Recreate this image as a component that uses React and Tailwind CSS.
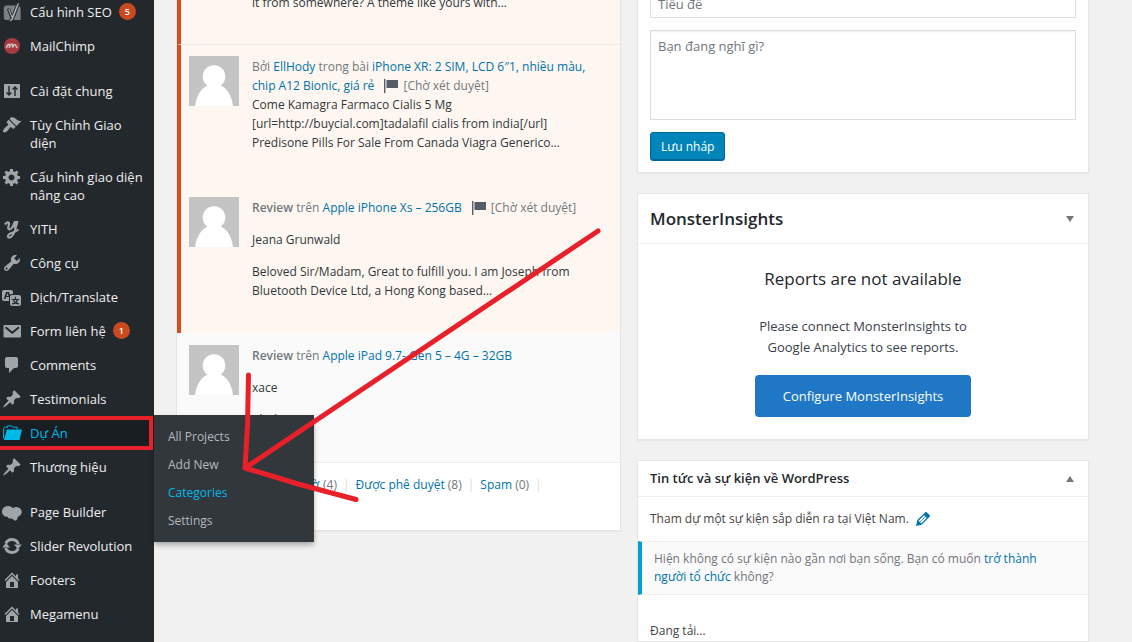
import React from "react";

const Dash = ({ children, size = 20, className = "" }) => (
  <svg viewBox="0 0 20 20" width={size} height={size} fill="currentColor" className={className} aria-hidden="true">
    {children}
  </svg>
);

const YoastIcon = () => (
  <Dash>
    <path d="M4.500 3.500h9.500L10 13.500 7.800 7.500H5l3.600 8.700L7.600 18H4.500c-1.500 0-2.700-1-2.700-2.600V6.100c0-1.500 1.200-2.600 2.700-2.600z" opacity=".7" />
    <path d="M17 4.200c1 .3 1.600 1.100 1.600 2.200V18h-7z" opacity=".7" />
    <path d="M15.400 1h2.200L11.600 16.500C10.800 18.700 9.500 19.500 7.300 19.500v-1.800c1.200-.1 1.800-.7 2.100-1.700L5.600 6.900h2.100l2.500 6.500z" fill="#b4b9be" stroke="#23282d" strokeWidth=".8" />
  </Dash>
);
const ChimpIcon = () => (
  <Dash>
    <circle cx="10" cy="10" r="8" fill="#a73a40" />
    <path d="M4.300 12.200c.6-2 1.200-3.800 2.400-4 .9-.1.800 1.600.6 3.600.8-2.400 1.700-3.800 2.600-3.700 1 .1.600 2 .6 3.500.8-1.900 1.500-3.200 2.400-3 1.100.2.700 2 2.600 3.200" fill="none" stroke="#cfc0c2" strokeWidth="1.500" />
  </Dash>
);
const SettingsIcon = () => (
  <Dash>
    <path d="M2 3h16v14H2z" />
    <path d="M7 5v9M4.600 11.500 7 14l2.400-2.500M13 15V6M10.600 8.500 13 6l2.400 2.500" fill="none" stroke="#23282d" strokeWidth="1.500" />
  </Dash>
);
const BrushIcon = () => (
  <Dash><path d="M14.48 11.06L7.41 3.99l1.5-1.5c.5-.56 2.3-.47 3.51.32 1.21.8 1.43 1.28 2.91 2.1 1.18.64 2.45 1.26 4.45.85zm-.71.71L6.7 4.7 4.93 6.47c-.39.39-.39 1.02 0 1.41l1.06 1.06c.39.39.39 1.03 0 1.42-.6.6-1.43 1.11-2.21 1.69-.35.26-.7.53-1.01.84C1.43 14.23.4 16.08 1.4 17.07c.99 1 2.84-.03 4.18-1.36.31-.31.58-.66.85-1.02.57-.78 1.08-1.61 1.69-2.21.39-.39 1.02-.39 1.41 0l1.06 1.06c.39.39 1.02.39 1.41 0z" /></Dash>
);
const GearIcon = () => (
  <Dash><path d="M18 12h-2.180c-.17.7-.44 1.350-.81 1.930l1.540 1.540-2.100 2.100-1.540-1.540c-.58.36-1.230.63-1.910.79V19H8v-2.180c-.68-.16-1.330-.43-1.910-.79l-1.540 1.540-2.120-2.120 1.540-1.540c-.36-.58-.63-1.230-.79-1.910H1V9.030h2.170c.16-.7.44-1.350.8-1.940L2.430 5.550l2.100-2.100 1.540 1.540c.58-.37 1.240-.64 1.930-.81V2h3v2.180c.68.16 1.330.43 1.910.79l1.540-1.540 2.120 2.120-1.540 1.540c.36.59.64 1.240.8 1.940H18V12zm-8.500 1.500c1.660 0 3-1.340 3-3s-1.340-3-3-3-3 1.340-3 3 1.340 3 3 3z" /></Dash>
);
const YithIcon = () => (
  <Dash>
    <path d="M3 5.500C4.300 3 7.300 2.300 7 5c-.3 2.200-1.700 5.200.3 5.300 2.400.1 4-3.400 5-6.800" fill="none" stroke="currentColor" strokeWidth="2.200" />
    <path d="M15 3c-1 4.500-1.600 8.200-3 11.200-1.500 3.200-4.600 5.300-5.900 3.800-1-1.500 1.100-3.200 3.600-4 2.300-.7 4.600-1.600 6.800-3.400" fill="none" stroke="currentColor" strokeWidth="2" />
    <path d="M12 2h4.600l-2 6.500-3.200 1z" />
  </Dash>
);
const WrenchIcon = () => (
  <Dash><path d="M16.68 9.77c-1.340 1.340-3.300 1.670-4.950.99l-5.410 6.520c-.99.99-2.590.99-3.580 0s-.99-2.590 0-3.570l6.520-5.420c-.68-1.650-.35-3.610.99-4.950 1.280-1.280 3.120-1.620 4.720-1.060l-2.890 2.890 2.820 2.820 2.860-2.870c.53 1.580.18 3.390-1.080 4.650zM3.810 16.210c.4.39 1.040.39 1.430 0 .4-.4.4-1.040 0-1.430-.39-.4-1.030-.4-1.430 0-.39.39-.39 1.030 0 1.430z" /></Dash>
);
const TranslateIcon = () => (
  <Dash><path d="M11 7H9.490c-.63 0-1.250.3-1.590.7L7 5H4.130l-2.390 7h1.690l.74-2H7v4H2c-1.100 0-2-.9-2-2V5c0-1.100.9-2 2-2h7c1.100 0 2 .9 2 2v2zM6.510 9H4.490l1-2.930zM10 8h7c1.100 0 2 .9 2 2v7c0 1.100-.9 2-2 2h-7c-1.100 0-2-.9-2-2v-7c0-1.100.9-2 2-2zm7.250 5v-1.080h-3.170V9.750h-1.160v2.170H9.750V13h1.280c.11.85.56 1.850 1.280 2.620-.87.36-1.890.62-2.310.62-.01.02.22.97.2 1.460.84 0 2.210-.5 3.280-1.150 1.090.65 2.480 1.150 3.340 1.150-.02-.49.2-1.440.2-1.460-.43 0-1.490-.27-2.380-.63.7-.77 1.140-1.770 1.250-2.610h1.360zm-3.810 1.930c-.5-.46-.85-1.130-1.010-1.930h2.090c-.17.8-.51 1.470-1 1.930l-.04.03s-.03-.02-.04-.03z" /></Dash>
);
const MailIcon = () => (
  <Dash>
    <rect x="1.500" y="4" width="17.500" height="12.500" rx="1" />
    <path d="M3.500 6.200l6.700 5.600L17 6.200" fill="none" stroke="#23282d" strokeWidth="2" />
  </Dash>
);
const CommentIcon = () => (
  <Dash><path d="M5 2h9c1.100 0 2 .9 2 2v7c0 1.100-.9 2-2 2h-2l-5 5v-5H5c-1.100 0-2-.9-2-2V4c0-1.100.9-2 2-2z" /></Dash>
);
const PinIcon = () => (
  <Dash><path d="M10.440 3.020l1.820-1.820 6.360 6.350-1.830 1.820c-1.050-.68-2.480-.57-3.410.36l-.75.75c-.92.93-1.040 2.350-.35 3.410l-1.830 1.820-2.410-2.410-2.800 2.790c-.42.42-3.380 2.710-3.800 2.290s1.860-3.390 2.280-3.810l2.790-2.790L4.100 9.360l1.830-1.820c1.050.69 2.480.57 3.400-.36l.75-.75c.93-.92 1.050-2.350.36-3.410z" /></Dash>
);
const FolderIcon = () => (
  <Dash>
    <path d="M1.600 15.500V5.500L2.500 4.200h3V2.900h4.200l1 1.300h4.500v2" fill="none" stroke="currentColor" strokeWidth="1" />
    <path d="M4.800 6.500H20L17.500 17H2z" />
  </Dash>
);
const BuilderIcon = () => (
  <Dash><path d="M6.200 4C9 4 10 5.600 11 6.200c1.300-1.200 3-1.500 4.800-.9 2.600.8 4.200 2.800 3.900 5.300-.3 2.200-2 3.700-4.200 4.300.4 1.200-.4 3.100-1.500 3.600-1.600.2-3-1.200-4-2.100-1.200.4-4 .2-4.500-1.600C2.400 14.900 0 12.500 0 9.700 0 6.400 2.900 4 6.200 4z" /></Dash>
);
const CycleIcon = () => (
  <Dash>
    <path d="M3.800 7.500a6.800 6.800 0 0 1 12.600.5M16.200 12.500a6.800 6.800 0 0 1-12.600-.5" fill="none" stroke="currentColor" strokeWidth="3" />
    <path d="M12 8.500h7.800l-3.900 4.800zM.2 11.500H8L4.100 6.700z" />
  </Dash>
);
const HomeIcon = () => (
  <Dash><path fillRule="evenodd" d="M16 8.500l1.530 1.530-1.060 1.060L10 4.600l-6.470 6.490-1.060-1.060L10 2.500l4 4v-2h2v4zm-6-2.460l6 5.990V18H4v-5.970zM12 17v-5H8v5h4z" /></Dash>
);
const PencilIcon = () => (
  <Dash size={20}><path d="M13.890 3.390l2.710 2.720c.46.46.42 1.240.03 1.640l-8.010 8.020-5.560 1.160 1.160-5.580s7.600-7.630 7.990-8.030c.39-.39 1.220-.39 1.680.07zm-2.730 2.790l-5.590 5.610 1.110 1.110 5.540-5.650zm-2.970 8.230l5.580-5.600-1.070-1.080-5.590 5.600z" /></Dash>
);

const menu = [
  { label: "Cấu hình SEO", icon: YoastIcon, badge: 5 },
  { label: "MailChimp", icon: ChimpIcon },
  { label: "Cài đặt chung", icon: SettingsIcon, gap: true },
  { label: "Tùy Chỉnh Giao diện", icon: BrushIcon },
  { label: "Cấu hình giao diện nâng cao", icon: GearIcon },
  { label: "YITH", icon: YithIcon },
  { label: "Công cụ", icon: WrenchIcon },
  { label: "Dịch/Translate", icon: TranslateIcon },
  { label: "Form liên hệ", icon: MailIcon, badge: 1 },
  { label: "Comments", icon: CommentIcon },
  { label: "Testimonials", icon: PinIcon },
  { label: "Dự Án", icon: FolderIcon, children: ["All Projects", "Add New", "Categories", "Settings"] },
  { label: "Thương hiệu", icon: PinIcon },
  { label: "Page Builder", icon: BuilderIcon, gap: true },
  { label: "Slider Revolution", icon: CycleIcon },
  { label: "Footers", icon: HomeIcon },
  { label: "Megamenu", icon: HomeIcon },
];

function MenuItem({ label, icon: Icon, badge, gap, children }) {
  const open = Boolean(children);
  return (
    <li className={gap ? "relative mt-[11px]" : "relative"}>
      <a
        href="#"
        className={
          open
            ? "flex items-start gap-2 bg-[#191e23] py-2 pr-2 pl-0.5 text-[13px] leading-[18px] text-[#00b9eb]"
            : "flex items-start gap-2 py-2 pr-2 pl-0.5 text-[13px] leading-[18px] text-[#eeeeee]"
        }
      >
        <span className={open ? "-my-px shrink-0" : "-my-px shrink-0 text-[#a0a5aa]"}>
          <Icon />
        </span>
        <span>{label}</span>
        {badge && (
          <span className="-ml-px flex size-[17px] items-center justify-center rounded-full bg-[#ca4a1f] text-[9px] font-semibold text-white">
            {badge}
          </span>
        )}
      </a>
      {open && (
        <>
          <ul className="absolute -top-px left-full z-10 w-40 bg-[#32373c] pt-2 pb-[7px] shadow-[0_3px_5px_rgba(0,0,0,0.3)]">
            {children.map((c) => (
              <li key={c}>
                <a
                  href="#"
                  className={
                    c === "Categories"
                      ? "block px-3.5 py-[5px] text-xs leading-[18px] text-[#00b9eb]"
                      : "block px-3.5 py-[5px] text-xs leading-[18px] text-[#b4b9be]"
                  }
                >
                  {c}
                </a>
              </li>
            ))}
          </ul>
          <div className="pointer-events-none absolute inset-y-0 -left-1 right-px z-20 border-4 border-[#e8202a]" />
        </>
      )}
    </li>
  );
}

const Avatar = () => (
  <svg viewBox="0 0 50 50" className="size-[50px] shrink-0" role="img" aria-label="Avatar">
    <path d="M0 0h50v50H0z" fill="#c4c4c4" />
    <circle cx="25" cy="20.500" r="11.300" fill="#fff" />
    <path d="M6 50C7.500 38 14 30.500 19 29.500h12C37 31 42.500 38 44 50z" fill="#fff" />
  </svg>
);

const Pending = () => (
  <span className="whitespace-nowrap text-[#72777c]">
    <svg viewBox="0 0 16 16" className="mr-1 ml-1.5 inline size-4 align-[-4px]" fill="#555d66" aria-hidden="true">
      <path d="M1 1h1.400v14H1zM3.500 2h11.500v8H3.500z" />
    </svg>
    [Chờ xét duyệt]
  </span>
);

const Link = ({ children }) => (
  <a href="#" className="text-[#0073aa]">{children}</a>
);

function Comment({ pending, divided, children }) {
  const tone = pending ? "border-l-[#d54e21] bg-[#fef7f1]" : "border-l-transparent bg-[#fafafa]";
  return (
    <li className={`flex gap-[13px] border-l-4 pr-3 pl-2 ${tone} ${divided ? "border-t border-t-[#f0e8e2] pt-[11px]" : "pt-3"}`}>
      <Avatar />
      <div className="pt-px text-[#32373c]">{children}</div>
    </li>
  );
}

const cardClass = "border border-[#e5e5e5] bg-white shadow-[0_1px_1px_rgba(0,0,0,0.04)]";

export default function App() {
  return (
    <div className="relative flex min-h-screen overflow-hidden bg-[#f1f1f1] font-['Open_Sans','Noto_Sans',sans-serif] text-xs leading-[19px] text-[#444444]">
      <nav className="w-[154px] shrink-0 bg-[#23282d]" aria-label="Menu">
        <ul className="-mt-[5px]">
          {menu.map((m) => (
            <MenuItem key={m.label} {...m} />
          ))}
        </ul>
      </nav>

      <main className="grid h-screen flex-1 grid-cols-[445fr_452fr] gap-4 pr-[43px] pl-[22px]">
        <section className={`-mt-7 self-start ${cardClass}`}>
          <ul>
            <li className="border-l-4 border-[#d54e21] bg-[#fef7f1] pt-5 pb-8 pl-[71px] text-[#32373c]">
              it from somewhere? A theme like yours with...
            </li>
            <Comment pending divided>
              <p className="text-[#72777c]">
                Bởi <Link>EllHody</Link> trong bài <Link>iPhone XR: 2 SIM, LCD 6″1, nhiều màu, chip A12 Bionic, giá rẻ</Link> <Pending />
              </p>
              <p className="pb-[33px]">
                Come Kamagra Farmaco Cialis 5 Mg
                <br />
                [url=http://buycial.com]tadalafil cialis from india[/url]
                <br />
                Predisone Pills For Sale From Canada Viagra Generico…
              </p>
            </Comment>
            <Comment pending>
              <p className="text-[#72777c]">
                <strong className="font-semibold">Review</strong> trên <Link>Apple iPhone Xs – 256GB</Link> <Pending />
              </p>
              <p className="pt-[13px]">Jeana Grunwald</p>
              <p className="pt-[13px] pb-[33px]">
                Beloved Sir/Madam, Great to fulfill you. I am Joseph from
                <br />
                Bluetooth Device Ltd, a Hong Kong based…
              </p>
            </Comment>
            <Comment>
              <p className="text-[#72777c]">
                <strong className="font-semibold">Review</strong> trên <Link>Apple iPad 9.7- Gen 5 – 4G – 32GB</Link>
              </p>
              <p className="pt-[13px]">xace</p>
              <p className="pt-[13px] pb-[33px]">nhphuc</p>
            </Comment>
          </ul>
          <div className="flex border-t border-[#eeeeee] px-3 pt-3 pb-9 text-[#72777c]">
            <span className="w-[130px] shrink-0 whitespace-nowrap text-right"><Link>Đang chờ</Link></span>
            <span className="pl-1">(4)</span>
            <span className="px-1.5 text-[#dddddd]">|</span>
            <span><Link>Được phê duyệt</Link> (8)</span>
            <span className="px-1.5 text-[#dddddd]">|</span>
            <span><Link>Spam</Link> (0)</span>
            <span className="px-1.5 text-[#dddddd]">|</span>
          </div>
        </section>

        <div className="-mt-7 flex flex-col gap-5">
          <form className={`px-3 pt-3 pb-[11px] ${cardClass}`}>
            <input
              aria-label="Tiêu đề"
              placeholder="Tiêu đề"
              className="block h-[33px] w-full border border-[#dddddd] px-[7px] pt-1 text-[13px] placeholder:text-[#72777c]"
            />
            <textarea
              aria-label="Nội dung"
              placeholder="Bạn đang nghĩ gì?"
              className="mt-3 block h-[90px] w-full resize-none border border-[#dddddd] px-[7px] py-1.5 text-[13px] leading-[19px] shadow-[inset_0_1px_2px_rgba(0,0,0,0.07)] placeholder:text-[#72777c]"
            />
            <button
              type="button"
              className="mt-3 block h-[29px] rounded-[3px] border border-[#006799] bg-[#0085ba] px-2.5 text-xs text-white shadow-[inset_0_-1px_0_#006799]"
            >
              Lưu nháp
            </button>
          </form>

          <section className={`pb-[22px] ${cardClass}`}>
            <header className="flex items-center justify-between border-b border-[#eeeeee] px-3 py-3 text-[#23282d]">
              <h2 className="text-[17px] leading-[25px] font-semibold">MonsterInsights</h2>
              <button type="button" aria-label="Mở rộng" className="pr-0.5">
                <svg viewBox="0 0 8 6" className="h-1.5 w-2" fill="#72777c"><path d="M0 0h8L4 6z" /></svg>
              </button>
            </header>
            <div className="flex flex-col items-center text-center text-[#393f4c]">
              <h3 className="pt-[22px] text-[17px] leading-[26px] text-[#23282d]">Reports are not available</h3>
              <p className="w-60 pt-6 text-[13px] leading-[21px]">Please connect MonsterInsights to Google Analytics to see reports.</p>
              <button type="button" className="mt-[17px] h-[42px] rounded bg-[#2077c5] px-7 text-[13px] font-medium text-white">
                Configure MonsterInsights
              </button>
            </div>
          </section>

          <section className={`flex-1 ${cardClass}`}>
            <header className="flex items-center justify-between border-b border-[#eeeeee] px-3 py-2">
              <h2 className="text-[13px] leading-[19px] font-semibold text-[#23282d]">Tin tức và sự kiện về WordPress</h2>
              <button type="button" aria-label="Thu gọn" className="pr-0.5">
                <svg viewBox="0 0 8 6" className="h-1.5 w-2" fill="#72777c"><path d="M0 6h8L4 0z" /></svg>
              </button>
            </header>
            <p className="flex items-center gap-1 px-3 py-3 leading-5">
              Tham dự một sự kiện sắp diễn ra tại Việt Nam.
              <a href="#" aria-label="Sửa" className="text-[#0073aa]"><PencilIcon /></a>
            </p>
            <p className="border-y border-l-4 border-y-[#eeeeee] border-l-[#00a0d2] bg-[#fafafa] py-2 pr-8 pl-3 leading-[18px] text-[#72777c]">
              Hiện không có sự kiện nào gần nơi bạn sống. Bạn có muốn <Link>trở thành người tổ chức</Link> không?
            </p>
            <p className="px-3 pt-[26px]">Đang tải…</p>
          </section>
        </div>
      </main>

      <svg
        className="pointer-events-none absolute top-0 left-0 z-30 h-[642px] w-[1132px]"
        viewBox="0 0 1132 642"
        fill="none"
        stroke="#e8202a"
        strokeWidth="5"
        strokeLinecap="round"
        aria-hidden="true"
      >
        <path d="M598 231 245 468M248.500 375l-1 50-2.500 43M245 468l53 16 58 15.500" />
      </svg>
    </div>
  );
}
